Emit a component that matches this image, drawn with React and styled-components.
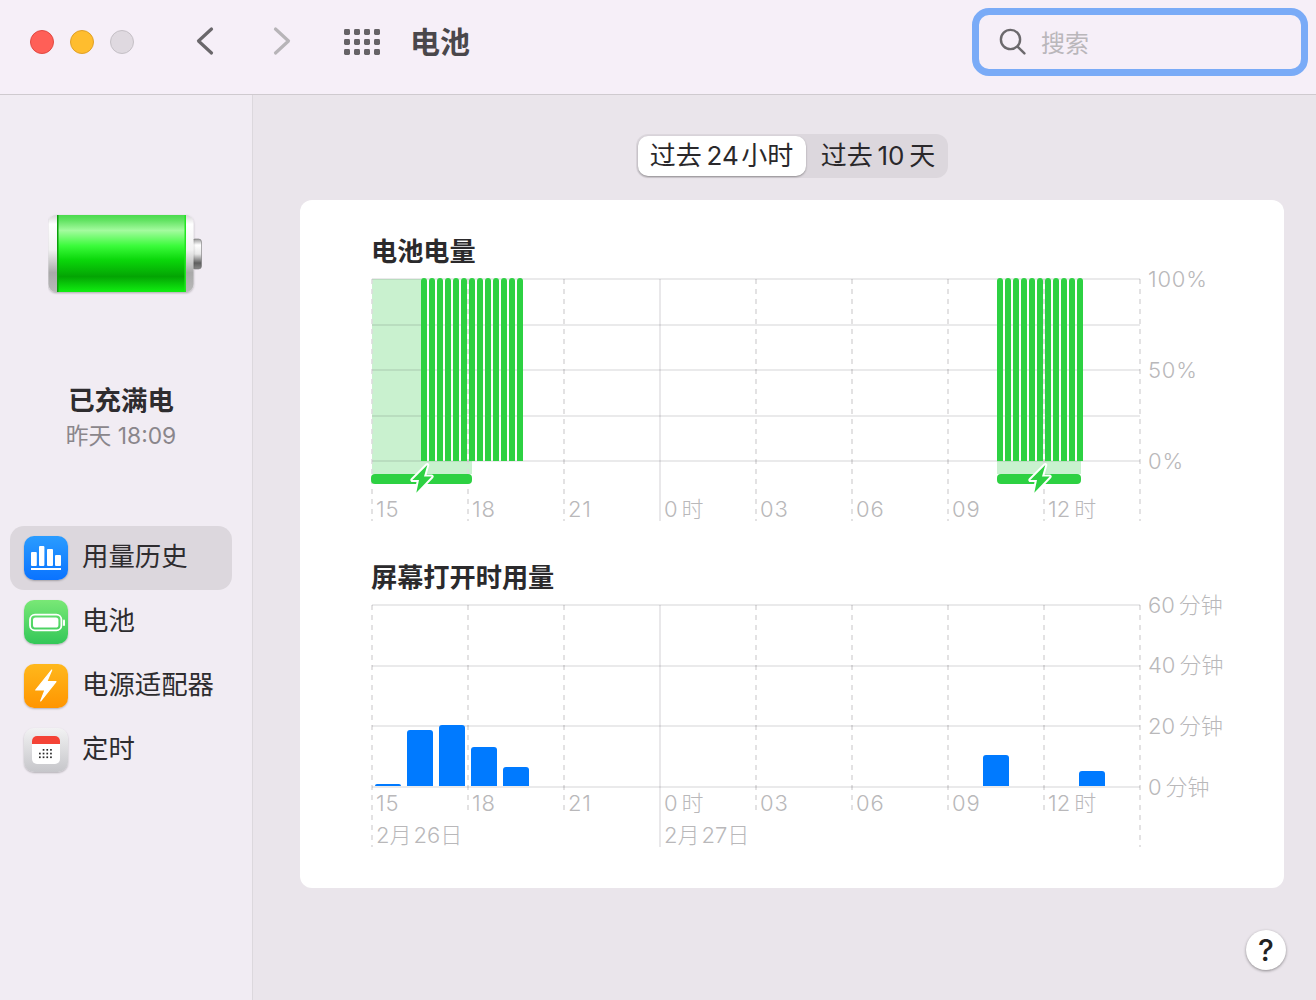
import React from 'react';
import styled, { createGlobalStyle } from 'styled-components';

const Global = createGlobalStyle`
  html, body { margin: 0; padding: 0; background: #eae5eb; }
  body { font-family: Inter, "Noto Sans CJK SC", sans-serif; }
  * { box-sizing: border-box; }
`;

const Window = styled.div`
  width: 1316px;
  height: 1000px;
  display: flex;
  flex-direction: column;
  overflow: hidden;
`;
const Toolbar = styled.header`
  height: 95px;
  flex: none;
  display: flex;
  align-items: center;
  padding: 0 8px 11px 30px;
  background: #f6eff8;
  border-bottom: 1px solid #cfcacf;
`;
const Lights = styled.div`
  display: flex;
  gap: 16px;
  margin-right: 61px;
`;
const Light = styled.span`
  width: 24px;
  height: 24px;
  border-radius: 50%;
  background: ${p => p.$bg};
  border: 1px solid ${p => p.$edge};
`;
const Chevron = styled.svg`
  width: 20px;
  height: 30px;
  flex: none;
  margin: 0 ${p => p.$gap}px 1px 0;
  fill: none;
  stroke: ${p => p.$color};
  stroke-width: 3.2;
  stroke-linecap: round;
  stroke-linejoin: round;
`;
const Dots = styled.svg`
  width: 36px;
  height: 26px;
  flex: none;
  margin-right: 30px;
  fill: #666367;
`;
const Title = styled.h1`
  margin: 0 0 4px;
  font-size: 30px;
  font-weight: 700;
  color: #4a474b;
`;
const Search = styled.div`
  margin-left: auto;
  width: 336px;
  height: 68px;
  display: flex;
  align-items: center;
  gap: 14px;
  padding-left: 20px;
  border: 7px solid #7aabf7;
  border-radius: 17px;
  background: #f6eff8;
`;
const SearchIcon = styled.svg`
  width: 28px;
  height: 28px;
  flex: none;
  fill: none;
  stroke: #6c696d;
  stroke-width: 2.4;
  stroke-linecap: round;
`;
const Placeholder = styled.span`
  font-size: 24px;
  color: #bab7bb;
`;
const Body = styled.div`
  flex: 1;
  display: flex;
  min-height: 0;
`;
const Sidebar = styled.aside`
  width: 253px;
  flex: none;
  display: flex;
  flex-direction: column;
  align-items: stretch;
  padding: 118px 20px 0 10px;
  background: #f1ecf3;
  border-right: 1px solid #dcd8dd;
`;
const BatteryArt = styled.svg`
  width: 160px;
  height: 86px;
  flex: none;
  margin-left: 38px;
  display: block;
`;
const Status = styled.div`
  margin-top: 84px;
  text-align: center;
  font-size: 26.4px;
  line-height: 34px;
  font-weight: 700;
  color: #2e2c2f;
`;
const StatusTime = styled.div`
  margin-top: 2px;
  text-align: center;
  font-size: 22.8px;
  line-height: 34px;
  color: #8a868b;
`;
const Nav = styled.nav`
  margin-top: 73px;
  display: flex;
  flex-direction: column;
`;
const NavItem = styled.div`
  height: 64px;
  display: flex;
  align-items: center;
  gap: 14px;
  padding-left: 14px;
  border-radius: 14px;
  background: ${p => (p.$active ? '#dcd7dd' : 'transparent')};
`;
const NavLabel = styled.span`
  margin-bottom: 7px;
  font-size: 26.4px;
  color: #2e2c2f;
`;
const NavIcon = styled.span`
  width: 44px;
  height: 44px;
  flex: none;
  display: block;
  border-radius: 10px;
  background: linear-gradient(180deg, ${p => p.$from}, ${p => p.$to});
  box-shadow: 0 1px 2px rgba(0, 0, 0, 0.25);
  svg { display: block; width: 44px; height: 44px; }
`;
const Main = styled.main`
  flex: 1;
  display: flex;
  flex-direction: column;
  align-items: center;
  padding: 39px 32px 0 47px;
  background: #eae5eb;
`;
const Segmented = styled.div`
  width: 312px;
  height: 44px;
  flex: none;
  display: flex;
  padding: 2px;
  border-radius: 12px;
  background: #dcd7dd;
`;
const Segment = styled.div`
  height: 40px;
  flex: none;
  width: ${p => p.$w}px;
  display: flex;
  align-items: center;
  justify-content: center;
  padding: 0 ${p => (p.$active ? 1 : 0)}px 5px ${p => (p.$active ? 0 : 4)}px;
  font-size: 26px;
  white-space: nowrap;
  color: #2a282b;
  border-radius: 10px;
  background: ${p => (p.$active ? '#fff' : 'transparent')};
  box-shadow: ${p => (p.$active ? '0 1px 2px rgba(0,0,0,.35)' : 'none')};
`;
const Card = styled.section`
  margin-top: 22px;
  width: 984px;
  height: 688px;
  flex: none;
  padding: 34px 0 0 72px;
  border-radius: 12px;
  background: #fff;
`;
const Heading = styled.h2`
  margin: 0 0 0 -1px;
  height: 34px;
  font-size: 26.2px;
  line-height: 36px;
  font-weight: 700;
  color: #2b2a2c;
`;
const Plot = styled.svg`
  display: block;
  width: 912px;
  height: ${p => p.$h}px;
  margin-bottom: ${p => p.$mb || 0}px;
  overflow: visible;
`;
const AxisText = styled.text`
  font-family: Inter, "Noto Sans CJK SC", sans-serif;
  font-size: 22px;
  font-weight: 300;
  letter-spacing: ${p => (p.$wide ? '0.8px' : '0')};
  fill: #b9b8ba;
`;
const Help = styled.div`
  align-self: flex-end;
  margin: 42px -2px 0 0;
  width: 40px;
  height: 40px;
  flex: none;
  display: flex;
  align-items: center;
  justify-content: center;
  border-radius: 50%;
  background: #fff;
  box-shadow: 0 1px 3px rgba(0, 0, 0, 0.4);
  font-size: 30px;
  font-weight: 500;
  color: #222;
`;

const HOURS = [
  [372, '15', true], [468, '18', true], [564, '21', true], [660, '0\u2009时'],
  [756, '03', true], [852, '06', true], [948, '09', true], [1044, '12\u2009时'],
];
const GRID = '#e4e3e5';
const DASH = '#dcdbdd';
const range = (n) => Array.from({ length: n }, (_, i) => i);

function Verticals({ top, bottom, longBottom }) {
  const xs = [372, 468, 564, 660, 756, 852, 948, 1044, 1140];
  return xs.map((x) => {
    const long = longBottom && (x === 372 || x === 660 || x === 1140);
    return (
      <line
        key={x}
        x1={x}
        x2={x}
        y1={top}
        y2={long ? longBottom : bottom}
        stroke={x === 660 ? GRID : DASH}
        strokeWidth="1.6"
        strokeDasharray={x === 660 ? undefined : '5 5'}
      />
    );
  });
}
function Horizontals({ ys }) {
  return ys.map((y) => (
    <line key={y} x1="372" x2="1140" y1={y} y2={y} stroke="rgba(40,40,50,.13)" strokeWidth="1.6" />
  ));
}
function HourLabels({ y }) {
  return HOURS.map(([x, t, wide]) => <AxisText key={x} x={x + 4} y={y} $wide={wide}>{t}</AxisText>);
}
function ChargeBars({ x, n }) {
  return range(n).map((i) => (
    <path
      key={i}
      d={`M${x + i * 8} 461V281a3 3 0 0 1 6 0V461Z`}
      fill="#2dd142"
    />
  ));
}
function Bolt({ dx }) {
  return (
    <path
      d={`M${427.3 + dx} 465L${412.3 + dx} 480H${419 + dx}L${416.3 + dx} 492.7L${431.7 + dx} 476.5H${424 + dx}Z`}
      fill="#2dd142"
      stroke="#fff"
      strokeWidth="4"
      strokeLinejoin="round"
      paintOrder="stroke"
    />
  );
}

function BatteryChart() {
  return (
    <Plot $h={260} $mb={32} viewBox="372 268 912 260">
      <path d="M372 279H421V461H472V474H372Z" fill="#c9f1cf" />
      <rect x="997" y="461" width="84" height="13" fill="#c9f1cf" />
      <Verticals top={279} bottom={521} />
      <Horizontals ys={[279, 325, 370, 416, 461]} />
      <ChargeBars x={421} n={13} />
      <ChargeBars x={997} n={11} />
      <rect x="371" y="474" width="101" height="10" rx="4" fill="#2dd142" />
      <rect x="997" y="474" width="84" height="10" rx="4" fill="#2dd142" />
      <Bolt dx={0} />
      <Bolt dx={618} />
      <HourLabels y={517} />
      <AxisText x="1148" y="287" $wide>100%</AxisText>
      <AxisText x="1148" y="378" $wide>50%</AxisText>
      <AxisText x="1148" y="469" $wide>0%</AxisText>
    </Plot>
  );
}

const USAGE = [[375, 784], [407, 730], [439, 725], [471, 747], [503, 767], [983, 755], [1079, 771]];

function UsageChart() {
  return (
    <Plot $h={268} viewBox="372 594 912 268">
      <Verticals top={605} bottom={815} longBottom={847} />
      <Horizontals ys={[605, 666, 726, 787]} />
      {USAGE.map(([x, y]) => {
        const r = Math.min(3, 786 - y);
        return (
          <path
            key={x}
            d={`M${x} 786V${y + r}a${r} ${r} 0 0 1 ${r} ${-r}H${x + 26 - r}a${r} ${r} 0 0 1 ${r} ${r}V786Z`}
            fill="#007aff"
          />
        );
      })}
      <HourLabels y={811} />
      <AxisText x="376" y="843">2月{'\u200a'}26日</AxisText>
      <AxisText x="664" y="843">2月{'\u200a'}27日</AxisText>
      <AxisText x="1148" y="613">60{'\u2009'}分钟</AxisText>
      <AxisText x="1148" y="673">40{'\u2009'}分钟</AxisText>
      <AxisText x="1148" y="734">20{'\u2009'}分钟</AxisText>
      <AxisText x="1148" y="795">0{'\u2009'}分钟</AxisText>
    </Plot>
  );
}

function BatteryImage() {
  return (
    <BatteryArt viewBox="48 212 160 86">
      <defs>
        <linearGradient id="metal" x1="0" y1="0" x2="0" y2="1">
          <stop offset="0" stopColor="#d8d6d8" />
          <stop offset=".12" stopColor="#ffffff" />
          <stop offset=".45" stopColor="#f2f2f2" />
          <stop offset=".75" stopColor="#a9a9a9" />
          <stop offset="1" stopColor="#b9b9b9" />
        </linearGradient>
        <linearGradient id="nub" x1="0" y1="0" x2="0" y2="1">
          <stop offset="0" stopColor="#9a9a9a" />
          <stop offset=".2" stopColor="#ffffff" />
          <stop offset=".5" stopColor="#e8e8e8" />
          <stop offset=".8" stopColor="#5f5f5f" />
          <stop offset="1" stopColor="#888" />
        </linearGradient>
        <linearGradient id="juice" x1="0" y1="0" x2="0" y2="1">
          <stop offset="0" stopColor="#4ada4c" />
          <stop offset=".07" stopColor="#62e362" />
          <stop offset=".2" stopColor="#a4fb9f" />
          <stop offset=".4" stopColor="#3bfb3b" />
          <stop offset=".58" stopColor="#0bd80b" />
          <stop offset=".8" stopColor="#03a403" />
          <stop offset=".92" stopColor="#0bd20b" />
          <stop offset="1" stopColor="#11ee11" />
        </linearGradient>
        <filter id="soft" x="-5%" y="-5%" width="110%" height="115%">
          <feDropShadow dx="0" dy="1" stdDeviation="1" floodColor="#000" floodOpacity=".3" />
        </filter>
      </defs>
      <rect x="192" y="238" width="9.5" height="30" rx="3" fill="url(#nub)" stroke="#777" strokeWidth=".6" />
      <rect x="48.5" y="214" width="145" height="77" rx="8" fill="url(#metal)" filter="url(#soft)" />
      <rect x="57" y="214" width="129" height="77" fill="url(#juice)" />
      <rect x="57" y="214" width="1.5" height="77" fill="#0b9f0b" />
      <rect x="184.5" y="214" width="1.5" height="77" fill="#22e622" />
    </BatteryArt>
  );
}

export default function App() {
  return (
    <Window>
      <Global />
      <Toolbar>
        <Lights>
          <Light $bg="#ff5f57" $edge="#e14942" />
          <Light $bg="#ffbd2e" $edge="#e0a028" />
          <Light $bg="#dfd9e0" $edge="#c5c0c6" />
        </Lights>
        <Chevron $gap={57} $color="#6a676b" viewBox="0 0 20 30">
          <path d="M16.5 3L3.5 15L16.5 27" />
        </Chevron>
        <Chevron $gap={52} $color="#b7b4b8" viewBox="0 0 20 30">
          <path d="M3.5 3L16.5 15L3.5 27" />
        </Chevron>
        <Dots viewBox="0 0 36 26">
          {[0, 10, 20].map((y) =>
            [0, 10, 20, 30].map((x) => (
              <rect key={`${x}-${y}`} x={x} y={y} width="6" height="6" rx="1.4" />
            ))
          )}
        </Dots>
        <Title>电池</Title>
        <Search>
          <SearchIcon viewBox="0 0 28 28">
            <circle cx="11.5" cy="11.5" r="9.6" />
            <path d="M18.6 18.6L25.4 25.4" />
          </SearchIcon>
          <Placeholder>搜索</Placeholder>
        </Search>
      </Toolbar>
      <Body>
        <Sidebar>
          <BatteryImage />
          <Status>已充满电</Status>
          <StatusTime>昨天 18:09</StatusTime>
          <Nav>
            <NavItem $active>
              <NavIcon $from="#2a9cff" $to="#0a73ff">
                <svg viewBox="0 0 44 44" fill="#fff">
                  <rect x="7" y="16" width="5.8" height="14" rx="1" />
                  <rect x="15" y="10" width="5.4" height="20" rx="1" />
                  <rect x="23" y="13" width="6" height="17" rx="1" />
                  <rect x="31" y="19" width="6" height="11" rx="1" />
                  <rect x="7" y="32" width="30" height="2" />
                </svg>
              </NavIcon>
              <NavLabel>用量历史</NavLabel>
            </NavItem>
            <NavItem>
              <NavIcon $from="#79e876" $to="#33c758">
                <svg viewBox="0 0 44 44">
                  <rect x="6" y="14.6" width="31.4" height="15.8" rx="5" fill="none" stroke="#fff" strokeWidth="1.8" />
                  <rect x="9" y="17.4" width="25.4" height="10.2" rx="2.6" fill="#fff" />
                  <rect x="39" y="19.4" width="2" height="6.6" rx="1" fill="#fff" />
                </svg>
              </NavIcon>
              <NavLabel>电池</NavLabel>
            </NavItem>
            <NavItem>
              <NavIcon $from="#ffb81c" $to="#ff9500">
                <svg viewBox="0 0 44 44">
                  <path d="M27.7 6L11.7 26H21L16.7 37L32 17.7H22.7Z" fill="#fff" stroke="#fff" strokeWidth="1.2" strokeLinejoin="round" />
                </svg>
              </NavIcon>
              <NavLabel>电源适配器</NavLabel>
            </NavItem>
            <NavItem>
              <NavIcon $from="#f2f2f3" $to="#c6c6ca">
                <svg viewBox="0 0 44 44">
                  <rect x="8" y="8" width="28" height="28" rx="5" fill="#fff" />
                  <path d="M8 16V13a5 5 0 0 1 5-5H31a5 5 0 0 1 5 5V16Z" fill="#f44336" />
                  {[0, 1, 2].map((r) =>
                    [0, 1, 2, 3].map((c) =>
                      r === 0 && c === 0 ? null : (
                        <rect key={`${r}${c}`} x={15 + c * 3.7} y={21 + r * 3.7} width="1.7" height="1.7" fill="#2a2a2a" />
                      )
                    )
                  )}
                </svg>
              </NavIcon>
              <NavLabel>定时</NavLabel>
            </NavItem>
          </Nav>
        </Sidebar>
        <Main>
          <Segmented>
            <Segment $active $w={168}>过去{'\u2009'}24{'\u200a'}小时</Segment>
            <Segment $w={140}>过去{'\u2009'}10{'\u2009'}天</Segment>
          </Segmented>
          <Card>
            <Heading>电池电量</Heading>
            <BatteryChart />
            <Heading>屏幕打开时用量</Heading>
            <UsageChart />
          </Card>
          <Help>?</Help>
        </Main>
      </Body>
    </Window>
  );
}
